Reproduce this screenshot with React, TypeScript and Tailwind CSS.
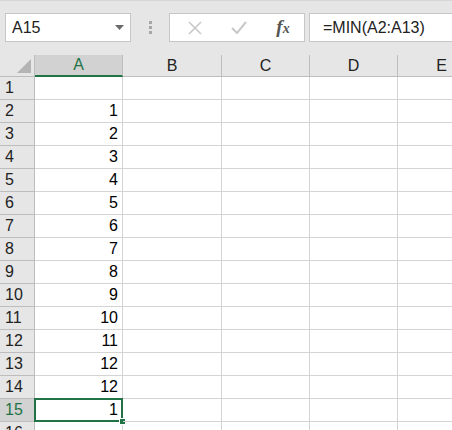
import React from "react";

const cols = [
  { name: "A", w: "w-[88px]" },
  { name: "B", w: "w-[99px]" },
  { name: "C", w: "w-[88px]" },
  { name: "D", w: "w-[88px]" },
  { name: "E", w: "w-[88px]" },
];

const values: (string | null)[] = [null, "1", "2", "3", "4", "5", "6", "7", "8", "9", "10", "11", "12", "12", "1", null];

export default function App() {
  return (
    <div className="w-[452px] h-[430px] overflow-hidden bg-white" style={{ fontFamily: '"Liberation Sans", Arial, sans-serif' }}>
      {/* Formula bar area */}
      <div className="h-[55px] bg-[#e6e6e6] border-t border-[#d6d6d6] flex items-start pt-[12px] pl-[5px]">
        <div className="w-[126px] h-[29px] bg-white border border-[#c6c6c6] flex items-center pl-[6px] pr-[6px] text-[16px] text-[#222]">
          <span className="flex-1">A15</span>
          <svg width="9" height="5" viewBox="0 0 9 5"><path d="M0 0h9L4.5 5z" fill="#6a6a6a" /></svg>
        </div>
        <div className="w-[38px] h-[29px] flex flex-col items-center justify-center gap-[2px]">
          <div className="w-[3px] h-[3px] bg-[#a6a6a6]" />
          <div className="w-[3px] h-[3px] bg-[#a6a6a6]" />
          <div className="w-[3px] h-[3px] bg-[#a6a6a6]" />
        </div>
        <div className="w-[136px] h-[29px] bg-white border border-[#c6c6c6] flex items-center">
          <div className="w-[46px] flex justify-center pl-[4px]">
            <svg width="14" height="14" viewBox="0 0 14 14"><path d="M1 1L13 13M13 1L1 13" stroke="#c8c8c8" strokeWidth="1.6" /></svg>
          </div>
          <div className="w-[46px] flex justify-center">
            <svg width="16" height="13" viewBox="0 0 16 13"><path d="M1 7L6 12L15 1" stroke="#c8c8c8" strokeWidth="2" fill="none" /></svg>
          </div>
          <div className="w-[42px] flex justify-center items-baseline italic font-bold text-[#555]" style={{ fontFamily: '"Liberation Serif", serif' }}>
            <span className="text-[19px]">f</span><span className="text-[14px]">x</span>
          </div>
        </div>
        <div className="ml-[4px] flex-1 h-[29px] bg-white border border-[#c6c6c6] border-r-0 flex items-center pl-[13px] text-[16px] text-[#222]">
          =MIN(A2:A13)
        </div>
      </div>

      {/* Column headers */}
      <div className="flex h-[22px]">
        <div className="w-[35px] h-[22px] shrink-0 bg-[#e6e6e6] border-r border-b border-[#bdbdbd] relative">
          <svg className="absolute right-[3px] bottom-[3px]" width="14" height="14" viewBox="0 0 14 14"><path d="M14 0V14H0z" fill="#b4b4b4" /></svg>
        </div>
        {cols.map((c, i) => (
          <div
            key={c.name}
            className={
              i === 0
                ? `${c.w} shrink-0 h-[22px] bg-[#d2d2d2] border-r border-[#bdbdbd] border-b-2 border-b-[#217346] flex items-center justify-center text-[16px] text-[#217346]`
                : `${c.w} shrink-0 h-[22px] bg-[#e6e6e6] border-r border-b border-[#bdbdbd] flex items-center justify-center text-[16px] text-[#222]`
            }
          >
            {c.name}
          </div>
        ))}
      </div>

      {/* Rows */}
      {values.map((v, r) => {
        const rowNum = r + 1;
        const selected = rowNum === 15;
        return (
          <div key={r} className={selected ? "flex h-[23px] relative z-10" : "flex h-[23px]"}>
            <div
              className={
                selected
                  ? "w-[35px] shrink-0 h-[23px] bg-[#d2d2d2] border-r border-b border-[#bdbdbd] flex items-center pl-[5px] text-[16px] text-[#217346]"
                  : "w-[35px] shrink-0 h-[23px] bg-[#e6e6e6] border-r border-b border-[#bdbdbd] flex items-center pl-[5px] text-[16px] text-[#222]"
              }
            >
              {rowNum}
            </div>
            {cols.map((c, i) => (
              <div
                key={c.name}
                className={`${c.w} shrink-0 h-[23px] border-r border-b border-[#d4d4d4] flex items-center justify-end pr-[4px] text-[16px] text-black relative`}
              >
                {i === 0 && v}
                {i === 0 && selected && (
                  <>
                    <div className="absolute left-[-1px] top-[-1px] right-[-1px] bottom-[-1px] border-2 border-[#217346]" />
                    <div className="absolute right-[-4px] bottom-[-4px] w-[7px] h-[7px] bg-[#217346] border border-white" />
                  </>
                )}
              </div>
            ))}
          </div>
        );
      })}
    </div>
  );
}
